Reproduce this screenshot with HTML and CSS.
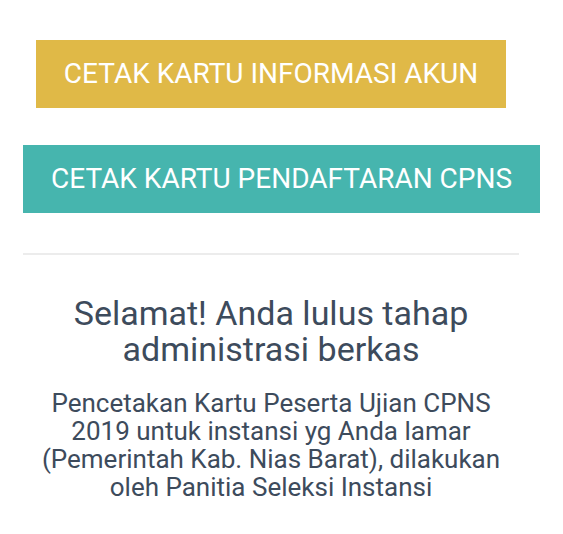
FILE: index.html
```html
<html>

<head>
    <link rel="stylesheet" href="styles.css">
</head>

<body>
<div class="panel">
    <div class="actions">
        <a class="btn btn-warning" href="#">Cetak Kartu Informasi Akun</a>
    </div>
    <div class="actions">
        <a class="btn btn-info" href="#">Cetak Kartu Pendaftaran CPNS</a>
    </div>
    <hr class="divider">
    <div class="notice">
        <h3 class="notice-title">Selamat! Anda lulus tahap administrasi berkas</h3>
        <p class="notice-text">Pencetakan Kartu Peserta Ujian CPNS 2019 untuk instansi yg Anda lamar (Pemerintah Kab. Nias Barat), dilakukan oleh Panitia Seleksi Instansi</p>
    </div>
</div>
</body>

</html>
```

FILE: styles.css
```css
body {
    font-family: Roboto, Arial, sans-serif;
    color: #3d4b5c;
    background-color: #fff;
    margin: 0;
    padding: 0;
}

.panel {
    width: 496px;
    margin-left: 23px;
    padding-top: 40px;
}

.actions {
    text-align: center;
    white-space: nowrap;
    margin-bottom: 37px;
}

.btn {
    display: inline-block;
    padding: 20px 28px;
    font-size: 28px;
    line-height: 28px;
    text-transform: uppercase;
    text-decoration: none;
    color: #fff;
}

.btn-warning {
    background-color: #e0b947;
}

.btn-info {
    background-color: #46b5ae;
}

.divider {
    border: none;
    border-top: 2px solid #ececec;
    margin: 40px 0 0 0;
}

.notice {
    text-align: center;
}

.notice-title {
    font-size: 34px;
    font-weight: normal;
    line-height: 36px;
    margin: 40px 0 22px 0;
}

.notice-text {
    font-size: 26px;
    line-height: 28px;
    margin: 0;
}
```
